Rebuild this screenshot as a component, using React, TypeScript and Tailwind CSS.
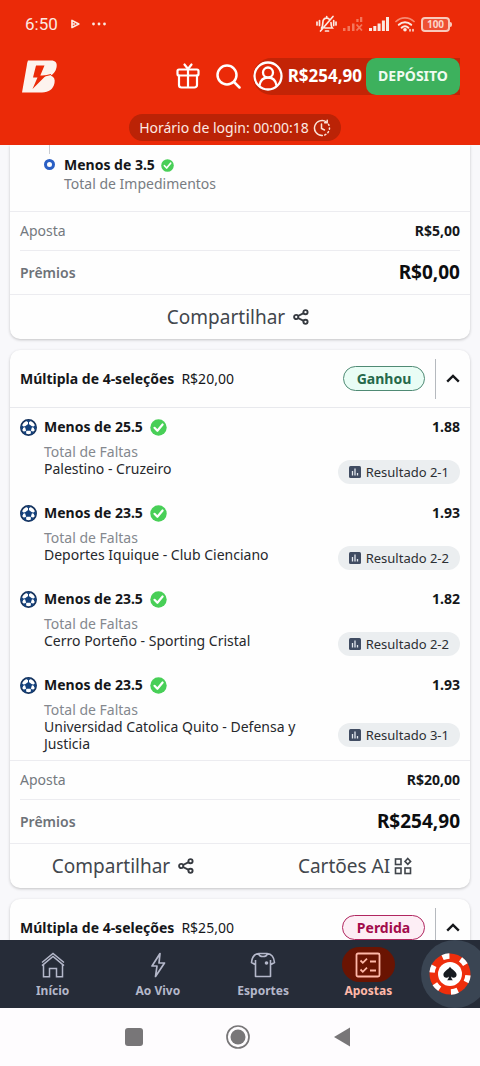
import React from "react";

interface Selection {
  market: string;
  type: string;
  match: string;
  odd: string;
  result: string;
}

interface NavItem {
  key: string;
  label: string;
  icon: React.ReactNode;
  active?: boolean;
}

const selections: Selection[] = [
  {
    market: "Menos de 25.5",
    type: "Total de Faltas",
    match: "Palestino - Cruzeiro",
    odd: "1.88",
    result: "Resultado 2-1",
  },
  {
    market: "Menos de 23.5",
    type: "Total de Faltas",
    match: "Deportes Iquique - Club Cienciano",
    odd: "1.93",
    result: "Resultado 2-2",
  },
  {
    market: "Menos de 23.5",
    type: "Total de Faltas",
    match: "Cerro Porteño - Sporting Cristal",
    odd: "1.82",
    result: "Resultado 2-2",
  },
  {
    market: "Menos de 23.5",
    type: "Total de Faltas",
    match: "Universidad Catolica Quito - Defensa y Justicia",
    odd: "1.93",
    result: "Resultado 3-1",
  },
];

/* ---------- icons ---------- */

function LogoIcon() {
  return (
    <svg width="36" height="33" viewBox="0 0 36 33" aria-hidden="true">
      <path
        fill="#fdf3ee"
        fillRule="evenodd"
        d="M6 .5H29c4.500 0 6.500 2.500 5.500 7-.8 3.800-2.800 6.500-5.800 8 3.300 1.200 4.600 3.800 3.800 7.500C31.300 29 27 32.500 20 32.500H0L4.800 5.500C5.100 3.500 5.300 2 6 .5ZM14 5.500 11 17.500H15.500L10.500 29 24 15.500H18.300L22.500 5.500Z"
      />
      <path d="M18.500 17 29 14.500" stroke="#eb2a08" strokeWidth="1.200" fill="none" />
    </svg>
  );
}

function GiftIcon() {
  return (
    <svg
      width="24"
      height="26"
      viewBox="0 0 24 26"
      fill="none"
      stroke="#fff"
      strokeWidth="2.200"
      strokeLinecap="round"
      strokeLinejoin="round"
      aria-hidden="true"
    >
      <rect x="1.500" y="6.500" width="21" height="6" rx="1.500" />
      <path d="M3 12.500V22a2.500 2.500 0 0 0 2.500 2.500h13A2.500 2.500 0 0 0 21 22v-9.500M12 6.500v18M8.500 1.500 12 6l3.500-4.500" />
    </svg>
  );
}

function SearchIcon() {
  return (
    <svg
      width="25"
      height="25"
      viewBox="0 0 25 25"
      fill="none"
      stroke="#fff"
      strokeWidth="2.500"
      strokeLinecap="round"
      aria-hidden="true"
    >
      <circle cx="11" cy="11" r="9.500" />
      <path d="m18 18 5.500 5.500" />
    </svg>
  );
}

function UserIcon() {
  return (
    <svg
      width="30"
      height="30"
      viewBox="0 0 30 30"
      fill="#e02807"
      stroke="#fff"
      strokeWidth="2.300"
      aria-hidden="true"
    >
      <circle cx="15" cy="15" r="13.500" />
      <path d="M6.500 24.500c.8-5 4-8 8.500-8s7.700 3 8.500 8" strokeLinecap="round" />
      <circle cx="15" cy="11.500" r="5" />
    </svg>
  );
}

function ClockIcon() {
  return (
    <svg
      width="18"
      height="18"
      viewBox="0 0 18 18"
      fill="none"
      stroke="#fbe3d8"
      strokeWidth="1.500"
      strokeLinecap="round"
      aria-hidden="true"
    >
      <path d="M9 16.500a7.500 7.500 0 1 1 4.500-13.500" />
      <path d="M15.500 5.300A7.500 7.500 0 0 1 9 16.500" strokeDasharray="1.200 2.600" />
      <path d="M8.500 5V9.500l3 1.500M14.200 1.200v2.600h-2.600" />
    </svg>
  );
}

function StatusIcons() {
  return (
    <div className="flex items-center gap-[6px]">
      <svg
        width="21"
        height="18"
        viewBox="0 0 21 18"
        fill="none"
        stroke="#fbe9e2"
        strokeWidth="1.700"
        strokeLinecap="round"
        aria-label="Silencioso"
      >
        <path d="M5.500 13c1-1.300 1.300-2.500 1.300-5 0-3 1.600-4.800 3.900-4.800 1.300 0 2.300.5 3 1.500M15 7.500c0 3 .3 4.200 1.300 5.500H9M9.500 16h3M10.700 3.200V1.500M17 1.500 4.500 16M1 7v3M3.500 5.500v5M20 7v3M17.700 5.500v5" />
      </svg>
      <svg width="20" height="14" viewBox="0 0 20 14" fill="#f4775c" aria-label="Sem sinal">
        <path d="M0 11h2.500v3H0zM4.500 9H7v5H4.500zM9 6.500h2.500V14H9zM17 0h2.300v5H17zM13.300 2h2.300v3h-2.300z" />
        <path d="m13.500 7.500 5.500 6M19 7.500l-5.500 6" stroke="#f4775c" strokeWidth="1.800" />
      </svg>
      <svg width="20" height="14" viewBox="0 0 20 14" fill="#fbe9e2" aria-label="Sinal">
        <path d="M0 11h3v3H0zM4.300 9h3v5h-3zM8.600 6.500h3V14h-3zM12.900 3.500h3V14h-3zM17 0h3v14h-3z" />
      </svg>
      <svg width="20" height="15" viewBox="0 0 20 15" fill="none" strokeLinecap="round" aria-label="Wi-Fi">
        <path d="M1 4.500C6-.3 14-.3 19 4.500" stroke="#f58a72" strokeWidth="1.700" />
        <path d="M3.800 7.700c3.600-3.300 8.800-3.300 12.400 0M6.600 10.700c2-1.800 4.800-1.800 6.800 0" stroke="#fbe9e2" strokeWidth="2" />
        <circle cx="10" cy="12.800" r="1.800" fill="#fbe9e2" />
        <path d="M15 12.500v1.500M18 12.500v1.500" stroke="#fbe9e2" strokeWidth="1.500" />
      </svg>
      <div className="flex items-center">
        <span className="flex h-[15px] w-[29px] items-center justify-center rounded-[4px] border-2 border-[#f9c9bb] bg-[#ee5034] text-[10px] leading-none font-bold text-[#fbd5ca]">
          100
        </span>
        <span className="h-[5px] w-[2px] rounded-r-sm bg-[#f9c9bb]" />
      </div>
    </div>
  );
}

function CheckIcon({ className }: { className: string }) {
  return (
    <svg className={className} viewBox="0 0 17 17" aria-label="Acertou">
      <circle cx="8.500" cy="8.500" r="8.200" fill="#48cf57" />
      <path
        d="m4.500 8.800 2.900 3 5.200-6.300"
        fill="none"
        stroke="#fff"
        strokeWidth="2.200"
        strokeLinecap="round"
        strokeLinejoin="round"
      />
    </svg>
  );
}

function BallIcon() {
  return (
    <svg width="17" height="17" viewBox="0 0 17 17" aria-hidden="true">
      <circle cx="8.500" cy="8.500" r="7.600" fill="#fff" stroke="#15325c" strokeWidth="1.700" />
      <path
        fill="#14417c"
        d="m8.500 4.800 3.700 2.700-1.400 4.200H6.200L4.800 7.500ZM5.200 1.200h6.600L8.500 3.500ZM1 5.800l2.500 1.500-.7 3.200-2 .2ZM16 5.800l-2.500 1.500.7 3.200 2 .2ZM3 12.200l3 .4.500 3.300-2-.4ZM14 12.200l-3 .4-.5 3.300 2-.4Z"
      />
      <path
        d="M8.500 2.500v3M5.300 7.600 2.500 8.500M11.700 7.600l2.800.9M6.500 11.300l-1.300 2M10.500 11.300l1.300 2"
        stroke="#14417c"
        strokeWidth="1"
      />
    </svg>
  );
}

function ShareIcon() {
  return (
    <svg
      width="16"
      height="16"
      viewBox="0 0 16 16"
      fill="none"
      stroke="#363a40"
      strokeWidth="1.900"
      aria-hidden="true"
    >
      <circle cx="12.500" cy="3.200" r="2.100" />
      <circle cx="3.200" cy="8" r="2.100" />
      <circle cx="12.500" cy="12.800" r="2.100" />
      <path d="m5 7 5.700-2.900M5 9l5.700 2.900" />
    </svg>
  );
}

function CardsIcon() {
  return (
    <svg
      width="18"
      height="18"
      viewBox="0 0 18 18"
      fill="none"
      stroke="#40454b"
      strokeWidth="1.600"
      aria-hidden="true"
    >
      <rect x="1.500" y="2" width="5.500" height="5.500" />
      <rect x="1.500" y="11" width="5.500" height="5.500" />
      <rect x="11" y="11" width="5.500" height="5.500" />
      <path d="m13.800 1.500 2.800 2.900-2.800 2.900L11 4.400Z" />
    </svg>
  );
}

function ChartIcon() {
  return (
    <svg width="12" height="12" viewBox="0 0 12 12" aria-hidden="true">
      <rect width="12" height="12" rx="1.500" fill="#404c62" />
      <path d="M3.500 5v4.500M6 2.500v7M8.500 7v2.500" stroke="#e4e9ee" strokeWidth="1.300" />
    </svg>
  );
}

function ChevronUp() {
  return (
    <svg width="14" height="9" viewBox="0 0 14 9" fill="none" aria-hidden="true">
      <path d="M1.200 7.600 7 2l5.800 5.600" stroke="#15171a" strokeWidth="2.400" />
    </svg>
  );
}

function ChipIcon() {
  return (
    <svg width="42" height="42" viewBox="0 0 42 42" aria-hidden="true">
      <circle cx="21" cy="21" r="20.500" fill="#ee2e0c" />
      <circle
        cx="21"
        cy="21"
        r="18"
        fill="none"
        stroke="#fff"
        strokeWidth="5.400"
        strokeDasharray="7 11.850"
        transform="rotate(4 21 21)"
      />
      <circle cx="21" cy="21" r="12" fill="#fff" />
      <path
        fill="#171b20"
        d="M21 13.800c1.600 2.700 6.600 4.700 6.600 8 0 3-3.700 3.900-5.400 1.700.1 1.800.7 3 1.700 3.700h-5.800c1-.7 1.600-1.900 1.700-3.700-1.700 2.200-5.400 1.300-5.400-1.700 0-3.300 5-5.300 6.600-8Z"
      />
    </svg>
  );
}

const navItems: NavItem[] = [
  {
    key: "home",
    label: "Início",
    icon: (
      <svg width="26" height="26" viewBox="0 0 26 26" fill="none" stroke="currentColor" strokeWidth="1.500">
        <path d="M2 10.500 13 1.500l11 9M2 13.700l11-9.200 11 9.200" />
        <path d="M3.500 12.500v12.200h6v-8.200h7v8.200h6V12.500" />
      </svg>
    ),
  },
  {
    key: "live",
    label: "Ao Vivo",
    icon: (
      <svg width="26" height="26" viewBox="0 0 26 26" fill="none" stroke="currentColor" strokeWidth="1.700" strokeLinejoin="round">
        <path d="M15 1.500 7 14h5l-1.500 10.500L19.500 11h-5.500Z" />
      </svg>
    ),
  },
  {
    key: "sports",
    label: "Esportes",
    icon: (
      <svg width="26" height="26" viewBox="0 0 26 26" fill="none" stroke="currentColor" strokeWidth="1.600" strokeLinejoin="round">
        <path d="M9 1.500h8c4.500.3 7 3.500 7.500 9l-4 2.300v11.700h-15V12.800l-4-2.300c.5-5.500 3-8.700 7.500-9ZM5.500 8v5M20.500 8v5M8.500 1.500c.8 4 8.200 4 9 0" />
        <circle cx="16.500" cy="11" r="1.800" fill="currentColor" stroke="none" />
      </svg>
    ),
  },
  {
    key: "bets",
    label: "Apostas",
    active: true,
    icon: (
      <svg width="26" height="26" viewBox="0 0 26 26" fill="none" stroke="currentColor" strokeWidth="1.800">
        <rect x="1.500" y="1.500" width="23" height="23" rx="1.500" />
        <path d="m5.500 8.500 2.300 2.300L12 6.700M5.500 17.500l2.300 2.300 4.200-4.100M15 9.500h6M15 18.500h6" />
      </svg>
    ),
  },
];

/* ---------- building blocks ---------- */

function Header() {
  return (
    <header className="shrink-0 bg-[#eb2a08] text-white">
      <div className="flex h-12 items-center justify-between pr-7 pl-[25px]">
        <div className="flex items-center gap-3 text-[#fbe9e2]">
          <span className="font-['Roboto'] text-[17px] leading-5">6:50</span>
          <svg width="10" height="10" viewBox="0 0 10 10" fill="none" stroke="currentColor" strokeWidth="1.700" aria-hidden="true">
            <path d="M2 1.500v7L8.800 5ZM2 5h3" strokeLinejoin="round" />
          </svg>
          <svg width="14" height="4" viewBox="0 0 14 4" fill="currentColor" aria-hidden="true">
            <circle cx="1.500" cy="2" r="1.400" />
            <circle cx="7" cy="2" r="1.400" />
            <circle cx="12.500" cy="2" r="1.400" />
          </svg>
        </div>
        <StatusIcons />
      </div>

      <div className="flex h-14 items-center justify-between pr-5 pl-[22px]">
        <a href="#inicio" aria-label="Página inicial">
          <LogoIcon />
        </a>
        <div className="flex items-center">
          <button type="button" aria-label="Presentes" className="mr-4">
            <GiftIcon />
          </button>
          <button type="button" aria-label="Buscar" className="mr-3">
            <SearchIcon />
          </button>
          <div className="flex h-[37px] items-center rounded-[10px] rounded-l-full bg-[#c32406]">
            <button type="button" className="flex items-center gap-[5px] pr-1 text-[17px] font-bold">
              <UserIcon />
              R$254,90
            </button>
            <button
              type="button"
              className="h-[37px] w-[94px] rounded-[10px] bg-[#3db15d] text-sm font-bold text-[#f0fbf0]"
            >
              DEPÓSITO
            </button>
          </div>
        </div>
      </div>

      <div className="flex justify-center pt-[10px] pr-[10px] pb-1">
        <div className="flex h-[27px] items-center gap-1 rounded-full bg-[#bb2306] px-[10px] text-sm text-[#fdeae3]">
          Horário de login: 00:00:18
          <ClockIcon />
        </div>
      </div>
    </header>
  );
}

function Totals({ stake, prize }: { stake: string; prize: string }) {
  return (
    <dl className="border-y border-[#ececf0] px-[10px] text-sm">
      <div className="flex h-[39px] items-center justify-between border-b border-[#ececf0]">
        <dt className="text-[#74797f]">Aposta</dt>
        <dd className="font-bold text-[#15171a]">{stake}</dd>
      </div>
      <div className="flex h-[43px] items-center justify-between">
        <dt className="font-semibold text-[#6d7278]">Prêmios</dt>
        <dd className="text-[19px] font-bold text-[#0c0d0f]">{prize}</dd>
      </div>
    </dl>
  );
}

function ShareButton() {
  return (
    <button type="button" className="flex items-center gap-2 pr-1 text-[19px] text-[#42474d]">
      Compartilhar
      <ShareIcon />
    </button>
  );
}

function BetHeader({ stake, won }: { stake: string; won: boolean }) {
  return (
    <div className="flex h-[57px] items-center px-[10px] text-sm text-[#15171a]">
      <h2 className="flex flex-1 items-baseline gap-[7px]">
        <span className="font-bold">Múltipla de 4-seleções</span>
        <span>{stake}</span>
      </h2>
      <span
        className={
          won
            ? "flex h-[25px] w-[82px] items-center justify-center rounded-full border border-[#4f8a74] bg-[#e9fdf5] font-bold text-[#25694a]"
            : "flex h-[25px] w-[83px] items-center justify-center rounded-full border border-[#b0265f] bg-[#fdeef5] font-bold text-[#a30c4b]"
        }
      >
        {won ? "Ganhou" : "Perdida"}
      </span>
      <span className="ml-[10px] h-10 w-px bg-[#b5b9be]" />
      <button type="button" aria-label="Recolher aposta" className="ml-[10px]">
        <ChevronUp />
      </button>
    </div>
  );
}

function SelectionRow({ item }: { item: Selection }) {
  return (
    <li className="flex gap-[7px]">
      <div className="pt-[2px]">
        <BallIcon />
      </div>
      <div className="min-w-0 flex-1 text-sm">
        <div className="flex h-5 items-center justify-between font-bold text-[#15171a]">
          <span className="flex items-center gap-[7px]">
            {item.market}
            <CheckIcon className="size-[17px]" />
          </span>
          <span>{item.odd}</span>
        </div>
        <p className="mt-[6px] leading-[17px] text-[#84888e]">{item.type}</p>
        <div className="flex min-h-6 items-center justify-between gap-8">
          <p className="self-start leading-[17px] text-[#26282c]">{item.match}</p>
          <span className="flex h-6 shrink-0 items-center gap-[5px] rounded-full bg-[#ebeef0] px-[11px] text-[13px] text-[#2c2f33]">
            <ChartIcon />
            {item.result}
          </span>
        </div>
      </div>
    </li>
  );
}

function BottomNav() {
  return (
    <nav className="flex h-[68px] shrink-0 overflow-hidden bg-[#262c38]">
      {navItems.map((item) => (
        <a
          key={item.key}
          href={`#${item.key}`}
          className={
            item.active
              ? "flex flex-1 flex-col items-center pt-[7px] text-[#ffb8a8]"
              : "flex flex-1 flex-col items-center pt-[7px] text-[#b4b8ca]"
          }
        >
          <span
            className={
              item.active
                ? "flex h-[35px] w-[53px] items-center justify-center rounded-full bg-[#6a1402]"
                : "flex h-[35px] w-[53px] items-center justify-center"
            }
          >
            {item.icon}
          </span>
          <span className="mt-px text-xs leading-4 font-bold">{item.label}</span>
        </a>
      ))}
      <div className="w-[59px] shrink-0">
        <button
          type="button"
          aria-label="Cassino"
          className="flex h-[68px] w-[68px] items-center rounded-full bg-[#3a4553] pl-2"
        >
          <ChipIcon />
        </button>
      </div>
    </nav>
  );
}

function SystemBar() {
  return (
    <div className="flex h-[58px] shrink-0 items-center justify-center gap-20 bg-[#fefcfe] pr-1">
      <button type="button" aria-label="Recentes" className="flex w-6 justify-center">
        <span className="size-[18px] rounded-[3px] bg-[#787678]" />
      </button>
      <button type="button" aria-label="Tela inicial">
        <svg width="24" height="24" viewBox="0 0 24 24" aria-hidden="true">
          <circle cx="12" cy="12" r="11" fill="none" stroke="#787678" strokeWidth="1.700" />
          <circle cx="12" cy="12" r="7.500" fill="#787678" />
        </svg>
      </button>
      <button type="button" aria-label="Voltar">
        <svg width="24" height="24" viewBox="0 0 24 24" aria-hidden="true">
          <path d="M20 2.500v19L4 12Z" fill="#787678" />
        </svg>
      </button>
    </div>
  );
}

export default function App() {
  return (
    <div className="flex h-screen flex-col bg-[#f8f8fb] font-['Noto_Sans',sans-serif]">
      <Header />

      <main className="flex min-h-0 flex-1 flex-col gap-[11px] overflow-hidden px-[10px]">
        <section className="shrink-0 rounded-b-[10px] bg-[#fefefe] shadow-[0_1px_3px_rgba(0,0,0,0.22)]">
          <div className="flex h-[66px] gap-[9px] pl-[34px] text-sm">
            <div className="flex w-[11px] flex-col items-center">
              <span className="h-[9px] w-px bg-[#c9ccd2]" />
              <span className="mt-[5px] size-[11px] rounded-full border-[3px] border-[#2a5fc4]" />
            </div>
            <div className="pt-[10px]">
              <p className="flex h-5 items-center gap-[6px] font-bold text-[#15171a]">
                Menos de 3.5
                <CheckIcon className="size-[13px]" />
              </p>
              <p className="leading-[17px] text-[#787c82]">Total de Impedimentos</p>
            </div>
          </div>
          <Totals stake="R$5,00" prize="R$0,00" />
          <div className="flex h-[44px] items-center justify-center">
            <ShareButton />
          </div>
        </section>

        <section className="shrink-0 rounded-[10px] bg-[#fefefe] shadow-[0_1px_3px_rgba(0,0,0,0.22)]">
          <BetHeader stake="R$20,00" won />
          <ul className="flex flex-col gap-[19px] border-t border-[#e8e9ed] px-[10px] pt-[9px] pb-2">
            {selections.map((item, i) => (
              <SelectionRow key={i} item={item} />
            ))}
          </ul>
          <Totals stake="R$20,00" prize="R$254,90" />
          <div className="grid h-[44px] grid-cols-2 items-center justify-items-center">
            <ShareButton />
            <button type="button" className="flex items-center gap-1 text-[19px] text-[#42474d]">
              Cartões AI
              <CardsIcon />
            </button>
          </div>
        </section>

        <section className="shrink-0 rounded-t-[10px] bg-[#fefefe] shadow-[0_1px_3px_rgba(0,0,0,0.22)]">
          <BetHeader stake="R$25,00" won={false} />
        </section>
      </main>

      <BottomNav />
      <SystemBar />
    </div>
  );
}
